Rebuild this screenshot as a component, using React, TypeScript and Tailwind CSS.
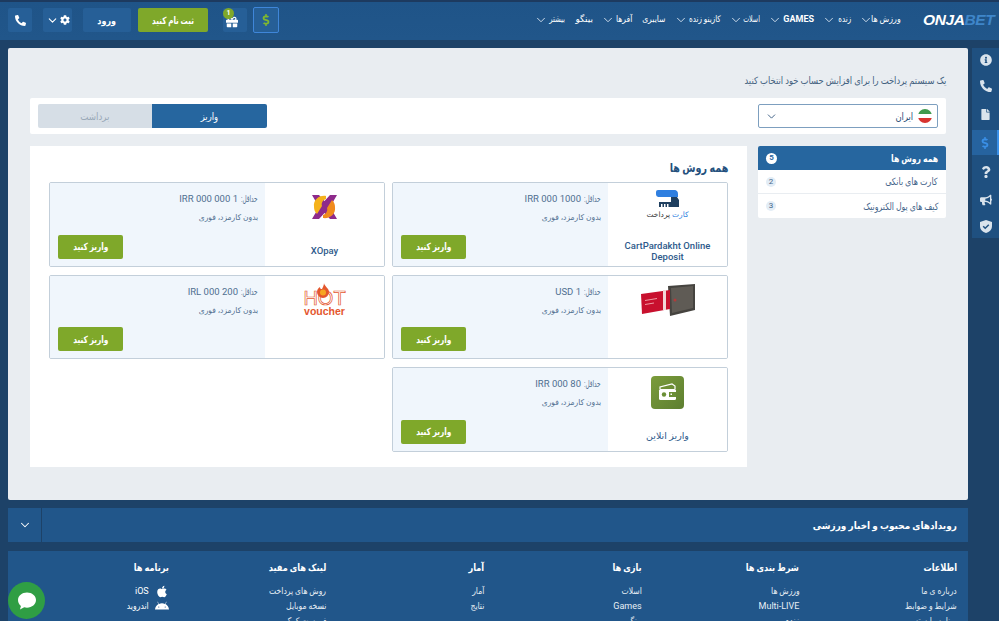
import React from 'react';
import { ChevronDown } from 'lucide-react';
import { FaAndroid, FaApple, FaBullhorn, FaCog, FaDollarSign, FaFile, FaGift, FaInfoCircle, FaPhoneAlt, FaQuestion } from 'react-icons/fa';

const navItems = [
  { label: 'ورزش ها', arrow: true, cls: 'w-[27px]', fit: 'scale-x-[.88]' },
  { label: 'زنده', arrow: true, cls: 'w-[14px]', fit: 'scale-x-[.8]' },
  { label: 'GAMES', arrow: true, cls: 'w-[31px] font-bold', fit: 'scale-x-100' },
  { label: 'اسلات', arrow: true, cls: 'w-[16px]', fit: 'scale-x-[.7]' },
  { label: 'کازینو زنده', arrow: true, cls: 'w-[32px]', fit: 'scale-x-[.8]' },
  { label: 'سایبری', arrow: false, cls: 'w-[23px]', fit: 'scale-x-[.85]' },
  { label: 'آفرها', arrow: true, cls: 'w-[16px]', fit: 'scale-x-[.85]' },
  { label: 'بینگو', arrow: false, cls: 'w-[17px]', fit: 'scale-x-100' },
  { label: 'بیشتر', arrow: true, cls: 'w-[16px]', fit: 'scale-x-[.75]' },
];

const footerCols = [
  { title: 'اطلاعات', links: ['درباره ی ما', 'شرایط و ضوابط', 'برنامه وابسته'] },
  { title: 'شرط بندی ها', links: ['ورزش ها', 'Multi-LIVE', 'زنده'] },
  { title: 'بازی ها', links: ['اسلات', 'Games', 'بینگو'] },
  { title: 'آمار', links: ['آمار', 'نتایج'] },
  { title: 'لینک های مفید', links: ['روش های پرداخت', 'نسخه موبایل', 'فهرست کمک'] },
];

// the Arabic glyphs we have are wider than the reference's, so squeeze them
function Fa({ className = 'origin-right scale-x-[.84]', children }: { className?: string; children: React.ReactNode }) {
  return <span className={`inline-block whitespace-nowrap ${className}`}>{children}</span>;
}

function CardLogo() {
  return (
    <div className="mb-1 flex flex-col items-center">
      <svg width="23" height="17" viewBox="0 0 23 17">
        <path d="M2 0h16a4 4 0 0 1 4 4v3H5a3 3 0 0 0-3 0z" fill="#2f7fe0" />
        <path d="M2 0h16a4 4 0 0 1 2 1v6H3a3 3 0 0 1-3-3V2a2 2 0 0 1 2-2z" fill="#2f7fe0" />
        <path d="M15 7h6l2 3v7H3v-5h12z" fill="#1f3f5f" />
        <path d="M5 14h1.500v3H5zm3 0h1.500v3H8zm3 0h1.500v3H11z" fill="#fff" />
      </svg>
      <div className="mt-[3px] text-[7.5px] leading-[10px] text-[#333]">
        <span className="text-[#2f7fe0]">کارت</span> پرداخت
      </div>
    </div>
  );
}

function WalletLogo() {
  return (
    <svg width="56" height="34" viewBox="0 0 56 34">
      <path d="M28 3 L55 1 V27 L30 33 Z" fill="#45433f" />
      <path d="M31 5 L53 3 V25 L32 30 Z" fill="#5f5b55" />
      <path d="M1 11 L30 7 V26 L2 31 Z" fill="#c8102e" />
      <path d="M23 7h3v20h-3z" fill="#f2d5d8" />
      <path d="M5 17l12-2v1l-12 2zm0 4l9-1.500v1l-9 1.500z" fill="#ee9aa3" />
      <circle cx="35" cy="17" r="1.500" fill="#b23a3a" />
    </svg>
  );
}

function XoLogo() {
  return (
    <svg width="25" height="26" viewBox="0 0 25 26">
      <path d="M0 1h7l5.500 6L18 1h7l-7 12 7 12h-7l-5.500-6L7 25H0l7-12z" fill="#8e2a8b" />
      <path d="M14 2C7 1 1 6 2 13c0 3 1 5 3 7l5-8c-1-3 1-6 4-7z" fill="#f5b21b" />
      <path d="M11 24c7 1 13-4 12-11 0-3-1-5-3-7l-5 8c1 3-1 6-4 7z" fill="#f08a1d" />
    </svg>
  );
}

function HotLogo() {
  return (
    <div dir="ltr" className="relative flex flex-col items-center pt-[7px] text-[#e4572e] [font-family:'Liberation_Sans',sans-serif]">
      <svg width="12" height="15" viewBox="0 0 12 15" className="absolute top-0 left-[14px]">
        <path d="M7 0c0 3 5 5 5 9a6 6 0 0 1-12 0c0-2 1-4 3-5 0 2 1 2 2 2 1-2 2-4 2-6z" fill="#e4572e" />
        <circle cx="6" cy="9.500" r="3" fill="#f6a623" />
      </svg>
      <div className="text-[20px] leading-[16px] text-transparent [-webkit-text-stroke:0.7px_#e4572e]">HOT</div>
      <div className="text-[10.500px] leading-[10px] font-semibold">voucher</div>
    </div>
  );
}

function OnlineLogo() {
  return (
    <div className="flex h-[33px] w-[33px] items-center justify-center rounded-[4px] bg-gradient-to-br from-[#7b9c3b] to-[#5d7f30]">
      <svg width="20" height="18" viewBox="0 0 20 18">
        <rect x="1" y="6" width="17" height="11" rx="1.500" fill="#fff" />
        <path d="M2 6V4l12-3 3 2v3" fill="none" stroke="#fff" strokeWidth="1.200" />
        <circle cx="6" cy="11.500" r="2.200" fill="#6a8f35" />
        <rect x="11" y="9" width="7" height="5" fill="#6a8f35" />
        <rect x="12.500" y="10.500" width="1.500" height="1.500" fill="#fff" />
      </svg>
    </div>
  );
}

const methods = [
  { min: '1000 000 IRR', logo: <CardLogo />, name: 'CartPardakht Online Deposit', bold: true },
  { min: '1 000 000 IRR', logo: <XoLogo />, name: 'XOpay', bold: true },
  { min: '1 USD', logo: <WalletLogo />, name: '', bold: false },
  { min: '200 000 IRL', logo: <HotLogo />, name: '', bold: false },
  { min: '80 000 IRR', logo: <OnlineLogo />, name: 'واریز انلاین', bold: false },
];

function HeaderButton({ className, children }: { className: string; children: React.ReactNode }) {
  return <div className={`flex h-6 items-center justify-center rounded-[2px] text-[10px] font-bold text-white ${className}`}>{children}</div>;
}

export default function App() {
  return (
    <div dir="rtl" className="relative h-[621px] w-[999px] overflow-hidden bg-[#1d4268] text-[10px] [font-family:Roboto,'DejaVu_Sans',sans-serif]">
      {/* Top bar */}
      <header className="flex h-10 items-center border-t-2 border-[#1d3a5f] bg-gradient-to-b from-[#1f5488] to-[#21568a] pb-[2px] pl-2">
        <div dir="ltr" className="mr-[1px] w-[75px] text-[15.500px] leading-none font-black tracking-[-0.4px] whitespace-nowrap text-white italic [font-family:'Liberation_Sans',sans-serif]">
          ONJA<span className="text-[#3f86c9]">BET</span>
        </div>
        <nav className="mr-[22px] flex items-center text-[9px] text-white">
          {navItems.map((item) => (
            <div key={item.label} className="ml-[11px] flex items-center gap-1 whitespace-nowrap">
              <span className={item.cls}><Fa className={`origin-right ${item.fit}`}>{item.label}</Fa></span>
              {item.arrow && <ChevronDown size={14} strokeWidth={1.600} className="-mx-[3px] text-[#d5e2ef]" />}
            </div>
          ))}
        </nav>
        <div className="mr-auto flex items-center">
          <div className="flex h-[26px] w-[26px] items-center justify-center rounded-[2px] border border-[#3f86d9] bg-[#265f97] text-[#7fb82f]">
            <FaDollarSign size={12} />
          </div>
          <div className="relative mr-[6px] flex h-6 w-6 items-center justify-center rounded-[2px] bg-[#265f97] text-white">
            <FaGift size={12} className="mt-[3px] ml-[-6px]" />
            <span className="absolute top-0 left-0 flex h-[11px] w-[11px] items-center justify-center rounded-full bg-[#7fa82a] text-[7px] font-bold">1</span>
          </div>
          <HeaderButton className="mr-[15px] w-[70px] bg-[#7fa82a]"><Fa className="origin-center scale-x-[.72]">ثبت نام کنید</Fa></HeaderButton>
          <HeaderButton className="mr-[7px] w-[48px] bg-[#265f97]"><Fa className="origin-center scale-x-[.8]">ورود</Fa></HeaderButton>
          <HeaderButton className="mr-[11px] w-[29px] gap-[1px] bg-[#265f97]">
            <FaCog size={10} />
            <ChevronDown size={13} />
          </HeaderButton>
          <HeaderButton className="mr-[11px] w-6 bg-[#265f97]">
            <FaPhoneAlt size={11} />
          </HeaderButton>
        </div>
      </header>

      <div className="flex items-start pt-2">
        {/* Side icons */}
        <aside className="flex h-[190px] w-[27px] flex-col items-center bg-[#1f5080] text-[#d9e3ec]">
          <div className="flex h-6 w-full items-center justify-center"><FaInfoCircle size={12} /></div>
          <div className="flex h-7 w-full items-center justify-center"><FaPhoneAlt size={12} /></div>
          <div className="flex h-7 w-full items-center justify-center"><FaFile size={11} /></div>
          <div className="mt-[2px] flex h-[25px] w-full items-center justify-center border-r-2 border-[#3a8fe6] bg-[#26639f] text-[#3a8fe6]"><FaDollarSign size={12} /></div>
          <div className="mt-[3px] flex h-7 w-full items-center justify-center"><FaQuestion size={12} /></div>
          <div className="flex h-7 w-full items-center justify-center"><FaBullhorn size={12} /></div>
          <div className="flex h-6 w-full items-center justify-center">
            <svg width="12" height="13" viewBox="0 0 12 13">
              <path d="M6 0l6 2v4c0 3.500-2.500 6-6 7-3.500-1-6-3.500-6-7V2z" fill="currentColor" />
              <path d="M3.200 6.300l2 2 3.600-3.600" fill="none" stroke="#1f5080" strokeWidth="1.500" />
            </svg>
          </div>
        </aside>

        <div className="mr-1 w-[960px]">
          {/* Main panel */}
          <main className="h-[452px] rounded-[2px] bg-[#e9edf1] px-[22px] pt-[27px]">
            <p className="h-[23px] text-[10px] leading-[12px] text-[#43617f]">
              <Fa>یک سیستم پرداخت را برای افزایش حساب خود انتخاب کنید</Fa>
            </p>
            <div className="flex h-9 items-center justify-between rounded-[2px] bg-white px-2">
              <div className="flex h-6 w-[180px] items-center rounded-[2px] border border-[#7d9fbf] pr-[5px] pl-[6px] text-[#2b4f78]">
                <span className="relative ml-[5px] flex h-[14px] w-[14px] flex-col overflow-hidden rounded-full">
                  <span className="h-[5px] bg-[#3f9a4e]" />
                  <span className="h-[4px] bg-white" />
                  <span className="h-[5px] bg-[#d8342f]" />
                </span>
                <span className="flex-1"><Fa>ایران</Fa></span>
                <ChevronDown size={13} strokeWidth={1.600} />
              </div>
              <div className="flex h-6 w-[229px] overflow-hidden rounded-[2px]">
                <div className="flex w-[115px] items-center justify-center bg-[#26669f] text-white"><Fa className="origin-center scale-x-[.84]">واریز</Fa></div>
                <div className="flex flex-1 items-center justify-center bg-[#d6dee6] text-[#9aa9b8]"><Fa className="origin-center scale-x-[.87]">برداشت</Fa></div>
              </div>
            </div>

            <div className="mt-3 flex items-start gap-[11px]">
              <div className="w-[188px] overflow-hidden rounded-[2px] bg-white text-[#45658a]">
                <div className="flex h-6 items-center justify-between bg-[#26669f] px-2 font-bold text-white">
                  <Fa className="origin-right scale-x-[.77]">همه روش ها</Fa>
                  <span className="flex h-[11px] w-[11px] items-center justify-center rounded-full bg-white text-[8px] text-[#26669f]">5</span>
                </div>
                <div className="flex h-6 items-center justify-between border-b border-[#e9edf1] px-2">
                  <Fa className="origin-right scale-x-[.8]">کارت های بانکی</Fa>
                  <span className="flex h-[10px] w-[10px] items-center justify-center rounded-full bg-[#e3edf6] text-[8px]">2</span>
                </div>
                <div className="flex h-6 items-center justify-between px-2">
                  <Fa className="origin-right scale-x-[.78]">کیف های پول الکترونیک</Fa>
                  <span className="flex h-[10px] w-[10px] items-center justify-center rounded-full bg-[#e3edf6] text-[8px]">3</span>
                </div>
              </div>

              <section className="h-[321px] w-[717px] bg-white px-[19px] pt-[15px]">
                <h2 className="mb-[7px] h-[14px] text-[12px] leading-[14px] font-bold text-[#24507d]">
                  <Fa className="origin-right scale-x-[.8]">همه روش ها</Fa>
                </h2>
                <div className="grid grid-cols-[336px_336px] gap-x-[7px] gap-y-2">
                  {methods.map((m) => (
                    <div key={m.min} className="flex h-[84.6px] overflow-hidden rounded-[2px] border border-[#c3cfda]">
                      <div className="flex w-[119px] flex-col items-center bg-white px-2 pt-[7px] text-center">
                        <div className="flex h-[34px] items-center">{m.logo}</div>
                        {m.name && (
                          <div className={`mt-auto flex h-[32px] items-center pt-[2px] text-[9.500px] leading-[11px] text-[#2e5a8b] ${m.bold ? 'font-medium' : ''}`}>{m.name}</div>
                        )}
                      </div>
                      <div className="flex flex-1 flex-col bg-[#f0f6fc] pt-[10px] pr-[7px] pb-[7px] pl-2 text-[#4f6f90]">
                        <div className="flex text-[9.500px] leading-[12px]">
                          <span className="ml-[2px] w-[18px]"><Fa className="origin-right scale-x-[.6]">حداقل:</Fa></span>
                          <span>{m.min}</span>
                        </div>
                        <div className="mt-[7px] text-[8px] leading-[12px]"><Fa className="origin-right scale-x-[.94]">بدون کارمزد، فوری</Fa></div>
                        <div className="mt-auto flex h-6 w-[65px] items-center justify-center self-end rounded-[2px] bg-[#7fa82a] font-bold text-white">
                          <Fa className="origin-center scale-x-[.74]">واریز کنید</Fa>
                        </div>
                      </div>
                    </div>
                  ))}
                </div>
              </section>
            </div>
          </main>

          {/* News strip */}
          <div className="mt-2 flex h-[34px] items-center bg-[#21568a] text-white">
            <div className="flex-1 pr-[11px] text-[10px] font-bold"><Fa className="origin-right scale-x-[.89]">رویدادهای محبوب و اخبار ورزشی</Fa></div>
            <div className="flex h-full w-[34px] items-center justify-center border-r border-[#1d4268]">
              <ChevronDown size={14} strokeWidth={1.800} />
            </div>
          </div>

          {/* Footer */}
          <footer className="mt-[9px] grid h-[80px] grid-cols-6 overflow-hidden bg-[#21568a] pt-[10px] pr-[11px] pl-[3px] text-white">
            {footerCols.map((col) => (
              <div key={col.title}>
                <div className="mb-[9px] text-[10px] leading-[14px] font-bold"><Fa className="origin-right scale-x-[.82]">{col.title}</Fa></div>
                {col.links.map((link) => (
                  <div key={link} className="h-[15px] text-[9px] leading-[15px] text-[#e8eff5]">
                    {/^[A-Za-z]/.test(link) ? link : <Fa className="origin-right scale-x-[.85]">{link}</Fa>}
                  </div>
                ))}
              </div>
            ))}
            <div>
              <div className="mb-[9px] text-[10px] leading-[14px] font-bold"><Fa className="origin-right scale-x-[.82]">برنامه ها</Fa></div>
              <div className="flex h-[15px] items-center gap-[6px] text-[9px]"><FaApple size={13} className="w-[14px]" />iOS</div>
              <div className="flex h-[15px] items-center gap-[6px] text-[9px]"><FaAndroid size={13} className="w-[14px]" /><Fa className="origin-right scale-x-[.85]">اندروید</Fa></div>
            </div>
          </footer>
        </div>
      </div>

      {/* Chat bubble */}
      <div className="absolute bottom-[2px] left-2 flex h-[37px] w-[37px] items-center justify-center rounded-full bg-[#2f9e44]">
        <svg width="20" height="20" viewBox="0 0 20 20" fill="#fff">
          <path d="M10 1.500c5 0 9 3.300 9 7.600s-4 7.600-9 7.600c-1 0-1.900-.1-2.800-.4L3 18.500l.9-3.600C2.100 13.500 1 11.400 1 9.100 1 4.800 5 1.500 10 1.500z" />
        </svg>
      </div>
    </div>
  );
}
